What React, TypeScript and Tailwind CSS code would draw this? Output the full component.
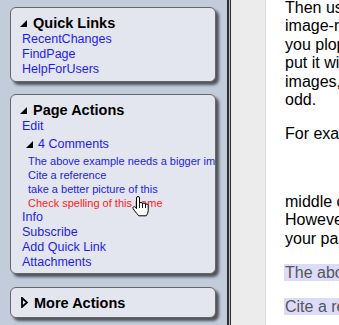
import React from 'react'

const font = { fontFamily: '"Liberation Sans", Arial, sans-serif' }

function DownTri() {
  return (
    <svg width="7" height="7" viewBox="0 0 7 7" className="shrink-0">
      <polygon points="7,0 7,7 0,7" fill="#000" />
    </svg>
  )
}

function RightTri() {
  return (
    <svg width="7" height="11" viewBox="0 0 7 11" className="shrink-0">
      <polygon points="1,1 6,5.5 1,10" fill="none" stroke="#000" strokeWidth="1.8" />
    </svg>
  )
}

function Hand() {
  return (
    <svg width="17" height="21" viewBox="0 0 17 21" className="absolute left-[132px] top-[196px]">
      <path
        d="M4.5 2 Q4.5 0.5 6 0.5 Q7.5 0.5 7.5 2 V7.5 Q7.5 6.5 9 6.5 Q10.5 6.5 10.5 7.8 V8 Q10.5 7 12 7 Q13.5 7 13.5 8.3 V9 Q13.5 8 14.8 8 Q16.2 8 16.2 9.3 V14.5 Q16.2 17.5 14.2 19.8 H6.8 Q5 17.8 2.6 14.8 L1.1 12.6 Q0.5 11.5 1.4 10.9 Q2.4 10.3 3.3 11.2 L4.5 12.6 Z"
        fill="#fff"
        stroke="#000"
        strokeWidth="1"
        strokeLinejoin="round"
      />
      <path d="M7.5 7.5 V12 M10.5 8 V12 M13.5 9 V12" stroke="#000" strokeWidth="0.9" fill="none" />
    </svg>
  )
}

function Box({ children, className = '' }: { children: React.ReactNode; className?: string }) {
  return (
    <div
      className={`w-[206px] rounded-[6px] border border-[#666] bg-[#e4e6ef] pl-[9px] shadow-[3px_3px_3px_rgba(0,0,0,0.6)] ${className}`}
    >
      {children}
    </div>
  )
}

function Heading({ label, open = true }: { label: string; open?: boolean }) {
  return (
    <div className="flex h-[18px] items-center gap-[6px] text-[14.5px] font-bold leading-[18px] text-black">
      {open ? <DownTri /> : <RightTri />}
      <span>{label}</span>
    </div>
  )
}

const linkCls = 'block pl-[2px] text-[12.5px] leading-[15px] text-[#1c1cf0]'

export default function App() {
  return (
    <div className="flex h-[325px] w-[339px] overflow-hidden bg-white" style={font}>
      {/* sidebar */}
      <div className="relative w-[227px] shrink-0 bg-[#c3ccdb] pl-[10px] pt-[7px]">
        <Box className="pt-[6px] pb-[4px]">
          <Heading label="Quick Links" />
          <a className={linkCls}>RecentChanges</a>
          <a className={linkCls}>FindPage</a>
          <a className={linkCls}>HelpForUsers</a>
        </Box>

        <Box className="mt-[12px] pt-[6px] pb-[3px]">
          <Heading label="Page Actions" />
          <a className={linkCls}>Edit</a>
          <div className="mt-[3px] flex h-[15px] items-center gap-[5px] pl-[6px] text-[12.5px] leading-[15px] text-[#1c1cf0]">
            <DownTri />
            <span>4 Comments</span>
          </div>
          <div className="mt-[2px] whitespace-nowrap pl-[8px] text-[11px] leading-[14px]">
            <div className="overflow-hidden text-[#2222e6]">The above example needs a bigger image</div>
            <div className="text-[#2222e6]">Cite a reference</div>
            <div className="text-[#2222e6]">take a better picture of this</div>
            <div className="text-[#ff1a1a]">Check spelling of this name</div>
          </div>
          <a className={linkCls}>Info</a>
          <a className={linkCls}>Subscribe</a>
          <a className={linkCls}>Add Quick Link</a>
          <a className={linkCls}>Attachments</a>
        </Box>

        <Box className="mt-[13px] flex h-[31px] items-center pl-[10px]">
          <Heading label="More Actions" open={false} />
        </Box>

        <Hand />
      </div>

      {/* divider */}
      <div className="w-[2px] shrink-0 bg-[#2e2e2e]" />
      <div className="w-[1px] shrink-0 bg-[#b9c0cc]" />
      <div className="w-[1px] shrink-0 bg-[#2e2e2e]" />
      <div className="w-[35px] shrink-0 border-r border-[#dadada] bg-[#ececec]" />

      {/* content */}
      <div className="mt-[-1px] min-w-0 flex-1 overflow-hidden whitespace-nowrap pl-[19px] text-[16px] leading-[18.4px] text-black">
        <p>
          <span className="block">Then use the attachment link to upload</span>
          <span className="block">image-resizing is done for you. When</span>
          <span className="block">you plop an image into a page, you should</span>
          <span className="block">put it with the text it refers to. Big</span>
          <span className="block">images, though, can make the layout look</span>
          <span className="block">odd.</span>
        </p>
        <p className="mt-[16px]">For example, this picture sits in the</p>
        <div className="h-[49px]" />
        <p>
          <span className="block">middle of the paragraph and breaks it.</span>
          <span className="block">However, a comment can point this out to</span>
          <span className="block">your partner without changing the page.</span>
        </p>
        <p className="mt-[16px] ml-[-1px]">
          <span className="bg-[#dcdcfa] pl-[1px] text-[#555]">The above example needs a bigger image</span>
        </p>
        <p className="mt-[16px] ml-[-1px]">
          <span className="bg-[#dcdcfa] pl-[1px] text-[#555]">Cite a reference</span>
        </p>
      </div>
    </div>
  )
}
